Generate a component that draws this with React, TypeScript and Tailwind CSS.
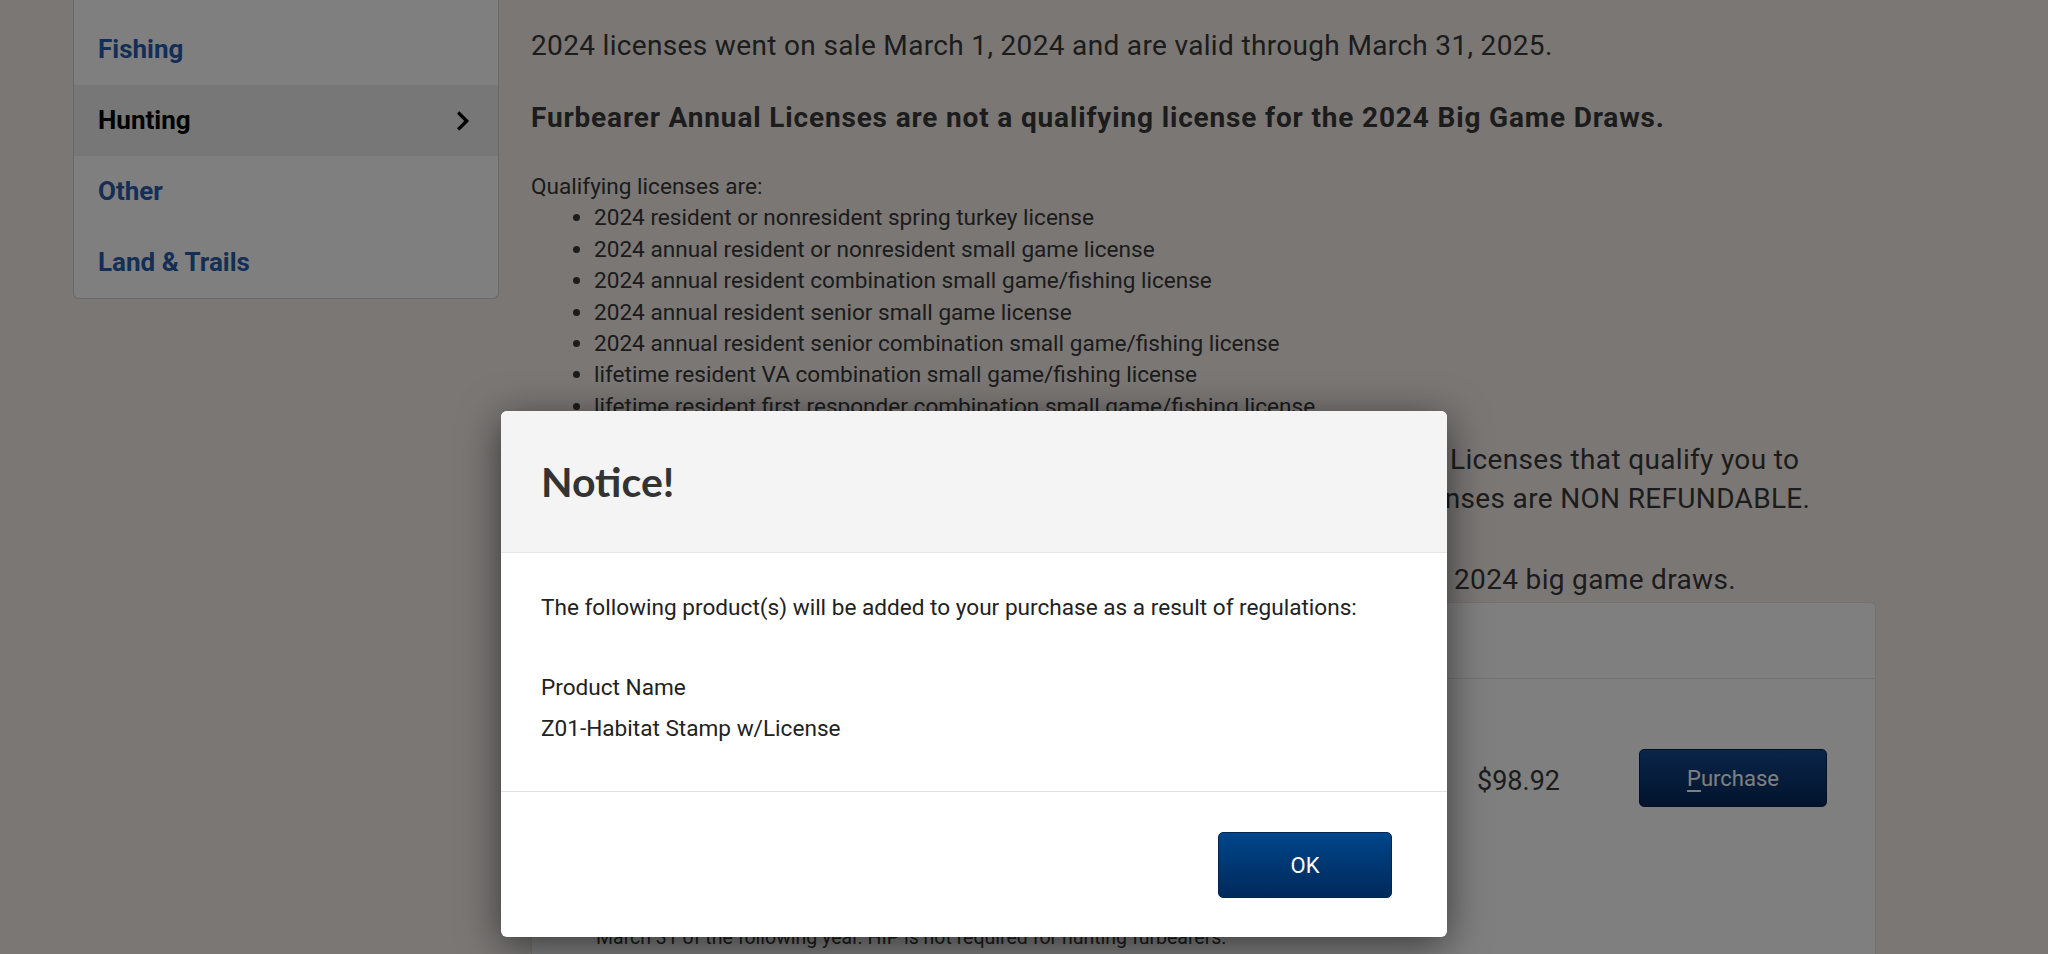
import { FaChevronRight } from "react-icons/fa"

const menu = [
    { label: "Fishing", active: false },
    { label: "Hunting", active: true },
    { label: "Other", active: false },
    { label: "Land & Trails", active: false },
]

const qualifying = [
    "2024 resident or nonresident spring turkey license",
    "2024 annual resident or nonresident small game license",
    "2024 annual resident combination small game/fishing license",
    "2024 annual resident senior small game license",
    "2024 annual resident senior combination small game/fishing license",
    "lifetime resident VA combination small game/fishing license",
    "lifetime resident first responder combination small game/fishing license",
]

const description = [
    "Valid for hunting and trapping furbearers statewide.",
    "Residents 16 years of age and older.",
    "Valid from the date of purchase through",
    "the end of the license year and expires on",
    "the last day of the license year, which is",
    "March 31 of the following year. HIP is not required for hunting furbearers.",
]

const Sidebar = () => (
    <aside className="w-[426px] shrink-0 self-start rounded-b-[6px] border-x border-b border-[#d2d2d2] bg-white pt-[14px]">
        {menu.map((item) => (
            <a
                key={item.label}
                href="#"
                className={
                    item.active
                        ? "flex h-[71px] items-center justify-between bg-[#efefef] pl-[24px] pr-[24px] text-[26px] font-bold text-black"
                        : "flex h-[71px] items-center justify-between pl-[24px] pr-[24px] text-[26px] font-bold text-[#2a5cab]"
                }
            >
                <span>{item.label}</span>
                {item.active && <FaChevronRight size={22} />}
            </a>
        ))}
    </aside>
)

const Content = () => (
    <main className="w-[1345px] shrink-0 text-[#383838]">
        <p className="mt-[28px] text-[28px] leading-[36px] tracking-[0.012em]">
            2024 licenses went on sale March 1, 2024 and are valid through March 31, 2025.
        </p>
        <p className="mt-[36px] text-[28px] font-bold leading-[36px] tracking-[0.03em]">
            Furbearer Annual Licenses are not a qualifying license for the 2024 Big Game Draws.
        </p>
        <p className="mt-[35px] text-[22.6px] leading-[31.4px]">Qualifying licenses are:</p>
        <ul className="list-disc pl-[63px] text-[22.6px] leading-[31.4px]">
            {qualifying.map((q) => (
                <li key={q}>{q}</li>
            ))}
        </ul>

        {/* the start of these lines sits under the notice dialog */}
        <div className="mt-[18px] text-[28px] leading-[39px] tracking-[0.012em]">
            <p className="flex whitespace-nowrap">
                <span className="w-[919px] shrink-0 overflow-hidden pr-[12px] text-right">Please make sure you have purchased one of the</span>
                <span>Licenses that qualify you to</span>
            </p>
            <p className="flex whitespace-nowrap">
                <span className="w-[861px] shrink-0 overflow-hidden pr-[12px] text-right">apply before entering the draws.</span>
                <span>Licenses are NON REFUNDABLE.</span>
            </p>
            <p className="mt-[42px] flex whitespace-nowrap">
                <span className="w-[923px] shrink-0 overflow-hidden pr-[12px] text-right">Furbearer licenses do not qualify you for the</span>
                <span>2024 big game draws.</span>
            </p>
        </div>

        <section className="mt-[3px] rounded-t-[5px] border border-[#e4e4e4] bg-[#fefefe]">
            <div className="flex h-[76px] items-center border-b border-[#e4e4e4] pl-[24px] text-[25px] font-bold">
                Furbearer Licenses
            </div>
            <div className="flex">
                <div className="w-[945px] pl-[64px] pt-[40px]">
                    <h3 className="text-[27px] font-bold leading-[36px]">Resident Furbearer Annual License</h3>
                    <div className="mt-[10px] text-[19.5px] leading-[31.4px]">
                        {description.map((d) => (
                            <p key={d}>{d}</p>
                        ))}
                    </div>
                </div>
                <div className="w-[162px] pt-[84px] text-[27px] leading-[36px]">$98.92</div>
                <div className="pt-[70px]">
                    <button className="h-[58px] w-[188px] rounded-[5px] border border-[#00214a] bg-gradient-to-b from-[#164a92] to-[#03295a] text-[22px] text-white">
                        <span className="underline underline-offset-4">P</span>urchase
                    </button>
                </div>
            </div>
        </section>
    </main>
)

const NoticeModal = () => (
    <div className="absolute left-[501px] top-[411px] w-[946px] overflow-hidden rounded-[6px] bg-white shadow-[0_8px_40px_rgba(0,0,0,0.55)]">
        <div className="flex h-[142px] items-center border-b border-[#e6e6e6] bg-[#f4f4f4] pl-[40px]">
            <h2 className="font-['Lato',sans-serif] text-[41px] font-bold text-[#333]">Notice!</h2>
        </div>
        <div className="border-b border-[#e2e2e2] px-[40px] pb-[47px] pt-[39px] text-[22.6px] leading-[31px] text-[#222]">
            <p>The following product(s) will be added to your purchase as a result of regulations:</p>
            <p className="mt-[49px]">Product Name</p>
            <p className="mt-[10px]">Z01-Habitat Stamp w/License</p>
        </div>
        <div className="flex justify-end pb-[39px] pr-[55px] pt-[40px]">
            <button className="h-[66px] w-[174px] rounded-[5px] border border-[#002552] bg-gradient-to-b from-[#00468a] to-[#00295b] text-[22px] text-white">
                OK
            </button>
        </div>
    </div>
)

export default function App() {
    return (
        <div className="relative h-[954px] overflow-hidden bg-[#f4eeea] font-['Roboto',sans-serif]">
            <div className="flex gap-[32px] pl-[73px]">
                <Sidebar />
                <Content />
            </div>
            <div className="absolute inset-0 bg-black/50" />
            <NoticeModal />
        </div>
    )
}
